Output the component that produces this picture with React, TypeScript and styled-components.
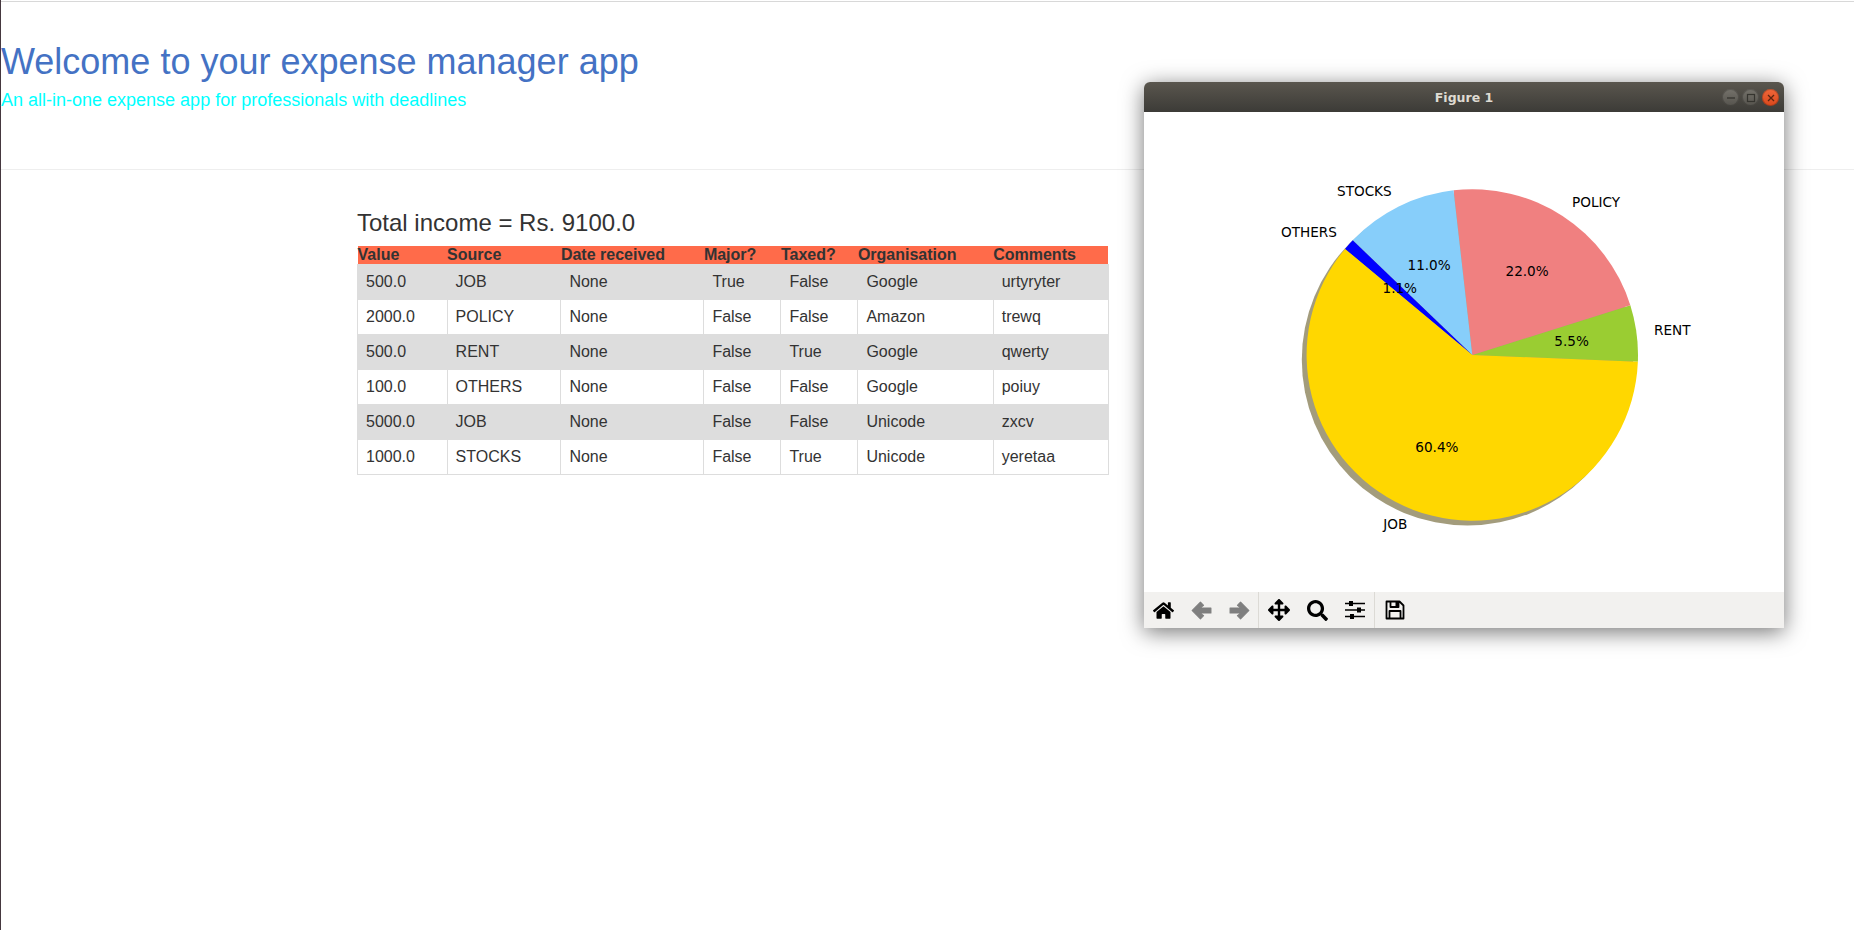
import React from 'react';
import styled, { createGlobalStyle } from 'styled-components';
import { FaHome, FaArrowsAlt, FaSearch } from 'react-icons/fa';

const GlobalStyle = createGlobalStyle`
  html, body {
    margin: 0;
    padding: 0;
    background: #fff;
    overflow: hidden;
  }
  body {
    font-family: "Liberation Sans", Arial, sans-serif;
    color: #333;
  }
`;

const Page = styled.div`
  position: relative;
  height: 930px;
  box-sizing: border-box;
  border-left: 1px solid #45383f;
  padding-top: 1px;
`;

const TopRule = styled.div`
  height: 1px;
  background: #d8d8d8;
`;

const Hero = styled.header`
  box-sizing: border-box;
  height: 168px;
  padding: 40px 0 0;
  border-bottom: 1px solid #eeeeee;
`;

const Title = styled.h1`
  margin: 0;
  font-size: 36px;
  font-weight: 400;
  line-height: 40px;
  color: #4472c4;
`;

const Subtitle = styled.p`
  margin: 8px 0 0;
  font-size: 18px;
  line-height: 20px;
  color: #00ffff;
`;

const Content = styled.main`
  width: 751px;
  margin-left: 356px;
  padding-top: 39px;
`;

const Total = styled.h2`
  margin: 0 0 9px;
  font-size: 24px;
  font-weight: 400;
  line-height: 28px;
  color: #333;
`;

const Table = styled.table`
  width: 751px;
  table-layout: fixed;
  border-collapse: collapse;
  font-size: 16px;
`;

const HeadRow = styled.tr`
  background: #ff6b4a;
`;

const Th = styled.th`
  padding: 0;
  text-align: left;
  font-weight: 700;
  line-height: 18px;
  color: #333;
`;

const Tr = styled.tr`
  &:nth-child(odd) {
    background: #dddddd;
  }
`;

const Td = styled.td`
  padding: 8px;
  border: 1px solid #dddddd;
  line-height: 18px;
  color: #333;
`;

const FigureWindow = styled.section`
  position: absolute;
  left: 1143px;
  top: 82px;
  width: 640px;
  border-radius: 6px 6px 0 0;
  box-shadow: 0 4px 22px rgba(0, 0, 0, 0.55);
  background: #fff;
`;

const TitleBar = styled.div`
  position: relative;
  height: 30px;
  display: flex;
  align-items: center;
  justify-content: center;
  border-radius: 6px 6px 0 0;
  background: linear-gradient(#5a564e, #3c3b37);
  font-family: "DejaVu Sans", sans-serif;
  font-size: 12.5px;
  font-weight: 700;
  color: #dfdbd2;
`;

const WindowButtons = styled.div`
  position: absolute;
  right: 5px;
  top: 7px;
  display: flex;
  gap: 3px;
`;

const WindowButton = styled.span<{ $close?: boolean }>`
  width: 17px;
  height: 17px;
  border-radius: 50%;
  display: flex;
  align-items: center;
  justify-content: center;
  background: ${(p) => (p.$close ? 'linear-gradient(#f0673a, #d9481c)' : 'linear-gradient(#75726b, #55534d)')};
  box-shadow: inset 0 0 0 1px rgba(0, 0, 0, 0.2);
`;

const Canvas = styled.svg`
  display: block;
  width: 640px;
  height: 480px;
  background: #fff;
`;

const ChartText = styled.text`
  font-family: "DejaVu Sans", sans-serif;
  font-size: 13.6px;
  fill: #000;
`;

const Toolbar = styled.div`
  display: flex;
  height: 36px;
  background: #f2f1ef;
`;

const ToolGroup = styled.div<{ $pad?: number }>`
  display: flex;
  padding-left: ${(p) => p.$pad ?? 0}px;
  border-right: 1px solid #dcdad5;
`;

const LastGroup = styled(ToolGroup)`
  border-right: none;
`;

const ToolButton = styled.span`
  width: 38px;
  display: flex;
  align-items: center;
  justify-content: center;
  color: #000;
`;

const CX = 328.3;
const CY = 243;
const R = 165.7;

const wedges = [
  { from: -2.3, to: 17.5, color: '#9acd32' },
  { from: 17.5, to: 96.5, color: '#f08080' },
  { from: 96.5, to: 136.2, color: '#87cefa' },
  { from: 136.2, to: 140.2, color: '#0000ff' },
  { from: 140.2, to: 357.7, color: '#ffd700' },
];

const wedgePath = (from: number, to: number) => {
  const rad = Math.PI / 180;
  const x1 = CX + R * Math.cos(from * rad);
  const y1 = CY - R * Math.sin(from * rad);
  const x2 = CX + R * Math.cos(to * rad);
  const y2 = CY - R * Math.sin(to * rad);
  const large = to - from > 180 ? 1 : 0;
  return `M${CX} ${CY}L${x1} ${y1}A${R} ${R} 0 ${large} 0 ${x2} ${y2}Z`;
};

// label, x, baseline, all relative to the canvas
const labels: [string, number, number][] = [
  ['STOCKS', 193, 84],
  ['POLICY', 428, 95.3],
  ['OTHERS', 137, 125.3],
  ['RENT', 510, 223.3],
  ['JOB', 239.3, 417],
  ['11.0%', 263.5, 158],
  ['22.0%', 361.5, 164],
  ['1.1%', 238.5, 181.3],
  ['5.5%', 410.3, 234],
  ['60.4%', 271.3, 340],
];

const SlidersIcon = () => (
  <svg width="20" height="20" viewBox="0 0 20 20">
    <path d="M0 3.500h20M0 10h20M0 16.500h20" stroke="#000" strokeWidth="1.600" />
    <path d="M4 1h4v5H4zM12 7.500h4v5h-4zM5 14h4v5H5z" fill="#000" />
  </svg>
);

const ArrowIcon: React.FC<{ flip?: boolean }> = ({ flip }) => (
  <svg width="21" height="21" viewBox="0 0 20 20">
    <polygon
      points="1,10 9,2 12,5 8.500,7.600 19,7.600 19,12.400 8.500,12.400 12,15 9,18"
      fill="#7f7f7f"
      stroke="#7f7f7f"
      strokeWidth="1"
      strokeLinejoin="round"
      transform={flip ? 'matrix(-1 0 0 1 20 0)' : undefined}
    />
  </svg>
);

const SaveIcon = () => (
  <svg width="20" height="20" viewBox="0 0 20 20">
    <path
      d="M1.500 1.500h13l4 4v13h-17zM5.500 1.500v5.500h8v-5.500M4.500 18.500v-7.500h11v7.500"
      fill="none"
      stroke="#000"
      strokeWidth="1.800"
      strokeLinejoin="round"
    />
    <path d="M10.500 2h2.500v4.500h-2.500z" fill="#000" />
  </svg>
);

const rows = [
  ['500.0', 'JOB', 'None', 'True', 'False', 'Google', 'urtyryter'],
  ['2000.0', 'POLICY', 'None', 'False', 'False', 'Amazon', 'trewq'],
  ['500.0', 'RENT', 'None', 'False', 'True', 'Google', 'qwerty'],
  ['100.0', 'OTHERS', 'None', 'False', 'False', 'Google', 'poiuy'],
  ['5000.0', 'JOB', 'None', 'False', 'False', 'Unicode', 'zxcv'],
  ['1000.0', 'STOCKS', 'None', 'False', 'True', 'Unicode', 'yeretaa'],
];

const columns = [
  { name: 'Value', width: 89.6 },
  { name: 'Source', width: 113.8 },
  { name: 'Date received', width: 143 },
  { name: 'Major?', width: 77 },
  { name: 'Taxed?', width: 77 },
  { name: 'Organisation', width: 135.3 },
  { name: 'Comments', width: 115.3 },
];

const App: React.FC = () => (
  <Page>
    <GlobalStyle />
    <TopRule />
    <Hero>
      <Title>Welcome to your expense manager app</Title>
      <Subtitle>An all-in-one expense app for professionals with deadlines</Subtitle>
    </Hero>
    <Content>
      <Total>Total income = Rs. 9100.0</Total>
      <Table>
        <colgroup>
          {columns.map((c) => (
            <col key={c.name} width={c.width} />
          ))}
        </colgroup>
        <thead>
          <HeadRow>
            {columns.map((c) => (
              <Th key={c.name}>{c.name}</Th>
            ))}
          </HeadRow>
        </thead>
        <tbody>
          {rows.map((row, i) => (
            <Tr key={i}>
              {row.map((cell, j) => (
                <Td key={j}>{cell}</Td>
              ))}
            </Tr>
          ))}
        </tbody>
      </Table>
    </Content>
    <FigureWindow>
      <TitleBar>
        Figure 1
        <WindowButtons>
          <WindowButton>
            <svg width="10" height="10" viewBox="0 0 10 10">
              <path d="M1 5h8" stroke="#35342f" strokeWidth="1.300" />
            </svg>
          </WindowButton>
          <WindowButton>
            <svg width="10" height="10" viewBox="0 0 10 10">
              <rect x="1.500" y="1.500" width="7" height="7" fill="none" stroke="#35342f" strokeWidth="1.200" />
            </svg>
          </WindowButton>
          <WindowButton $close>
            <svg width="10" height="10" viewBox="0 0 10 10">
              <path d="M2 2l6 6M8 2l-6 6" stroke="#5c2410" strokeWidth="1.300" />
            </svg>
          </WindowButton>
        </WindowButtons>
      </TitleBar>
      <Canvas viewBox="0 0 640 480">
        <circle cx={CX - 4.8} cy={CY + 4.8} r={R} fill="#a39c7c" />
        {wedges.map((w) => (
          <path key={w.color} d={wedgePath(w.from, w.to)} fill={w.color} />
        ))}
        {labels.map(([text, x, y]) => (
          <ChartText key={text} x={x} y={y}>
            {text}
          </ChartText>
        ))}
      </Canvas>
      <Toolbar>
        <ToolGroup>
          <ToolButton>
            <FaHome size={21} />
          </ToolButton>
          <ToolButton>
            <ArrowIcon />
          </ToolButton>
          <ToolButton>
            <ArrowIcon flip />
          </ToolButton>
        </ToolGroup>
        <ToolGroup $pad={1}>
          <ToolButton>
            <FaArrowsAlt size={22} />
          </ToolButton>
          <ToolButton>
            <FaSearch size={21} />
          </ToolButton>
          <ToolButton>
            <SlidersIcon />
          </ToolButton>
        </ToolGroup>
        <LastGroup $pad={1}>
          <ToolButton>
            <SaveIcon />
          </ToolButton>
        </LastGroup>
      </Toolbar>
    </FigureWindow>
  </Page>
);

export default App;
